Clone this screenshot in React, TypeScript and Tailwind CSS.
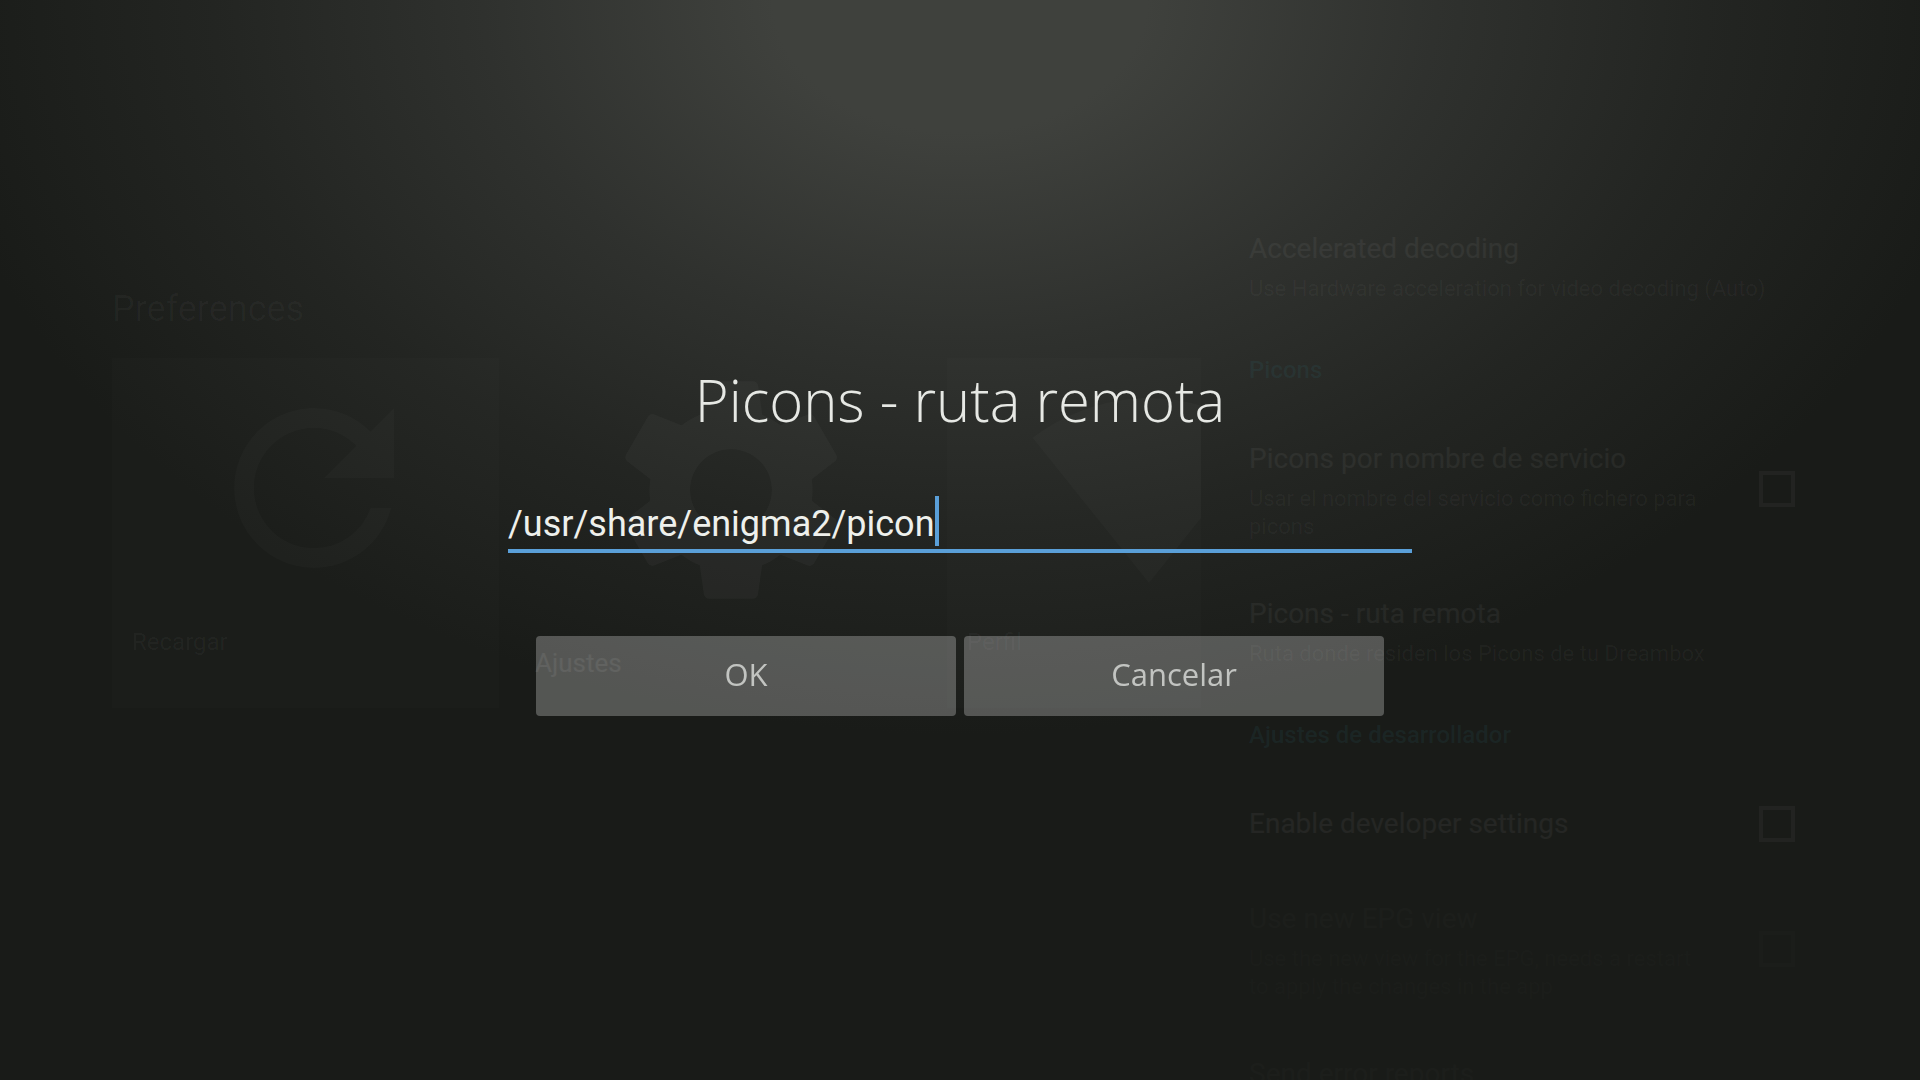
import { useEffect, useRef } from 'react'
import { MdRefresh, MdSettings, MdSignalWifi4Bar } from 'react-icons/md'

const cards = [
  { label: 'Recargar', icon: MdRefresh },
  { label: 'Ajustes', icon: MdSettings, focused: true },
  { label: 'Perfil', icon: MdSignalWifi4Bar },
]

function Card({ label, icon: Icon, focused }: { label: string; icon: typeof MdRefresh; focused?: boolean }) {
  if (focused) {
    return (
      <li className="flex h-[400px] w-[448px] shrink-0 flex-col items-center">
        <div className="flex h-[314px] items-center pl-4 text-white/3">
          <Icon size={272} />
        </div>
        <span className="self-start pl-9 text-[26px] leading-8 text-white/7">{label}</span>
      </li>
    )
  }
  return (
    <li className="flex h-[350px] w-[387px] shrink-0 flex-col items-center bg-white/1">
      <div className="flex h-[268px] items-center pb-2 pl-4 text-white/2">
        <Icon size={240} />
      </div>
      <span className="self-start pl-5 text-[24px] leading-8 text-white/4">{label}</span>
    </li>
  )
}

type OptionProps = { title: string; summary?: string; check?: boolean; faded?: boolean }

function Option({ title, summary, check, faded }: OptionProps) {
  return (
    <label className={`flex items-center justify-between ${faded ? 'opacity-30' : ''}`}>
      <span className={check ? 'w-[460px]' : 'w-full'}>
        <span className="block text-[28px] leading-[44px] text-white/5">{title}</span>
        {summary && <span className="mt-1 block text-[22px] leading-7 text-white/4">{summary}</span>}
      </span>
      {check && <input type="checkbox" className="size-9 shrink-0 appearance-none border-4 border-white/4" />}
    </label>
  )
}

function Heading({ children }: { children: string }) {
  return <h2 className="text-[24px] leading-8 font-medium text-[#2f8f9f]/10">{children}</h2>
}

export default function App() {
  const input = useRef<HTMLInputElement>(null)

  useEffect(() => {
    input.current?.focus()
  }, [])

  return (
    <div className="relative min-h-screen overflow-hidden bg-[#191b18] font-[Roboto,sans-serif]">
      <div className="absolute inset-0 bg-[radial-gradient(ellipse_54%_68%_at_50%_0%,#3f413d_0%,#3f413d_18%,#2f312e_46%,#232522_72%,#191b18_100%)]" />

      {/* Dimmed preferences screen */}
      <div className="absolute inset-0 flex" inert>
        <main className="min-w-0 flex-1 overflow-hidden pt-[285px] pl-[112px]">
          <h1 className="text-[36px] leading-[48px] text-white/3">Preferences</h1>
          <ul className="flex items-center">
            {cards.map(card => (
              <Card key={card.label} {...card} />
            ))}
          </ul>
        </main>

        <aside className="flex w-[719px] shrink-0 flex-col gap-[51px] overflow-hidden pt-[227px] pr-[125px] pl-12">
          <Option title="Accelerated decoding" summary="Use Hardware acceleration for video decoding (Auto)" />
          <Heading>Picons</Heading>
          <Option
            title="Picons por nombre de servicio"
            summary="Usar el nombre del servicio como fichero para picons"
            check
          />
          <Option title="Picons - ruta remota" summary="Ruta donde residen los Picons de tu Dreambox" />
          <Heading>Ajustes de desarrollador</Heading>
          <Option title="Enable developer settings" check />
          <Option
            title="Use new EPG view"
            summary="Use the new view for the EPG, needs a restart to apply the changes in the app"
            check
            faded
          />
          <Option title="Send error reports" faded />
        </aside>
      </div>

      {/* Dialog */}
      <form
        className="relative mx-auto flex min-h-screen w-[904px] flex-col items-center pt-[364px]"
        onSubmit={e => e.preventDefault()}
      >
        <label htmlFor="ruta" className="font-['Open_Sans',sans-serif] text-[58px] leading-[72px] font-light text-[#e6e8e4]">
          Picons - ruta remota
        </label>
        <div className="mt-[60px] w-full border-b-4 border-[#5a9fd8]">
          <div className="flex h-[53px] items-start">
            <input
              id="ruta"
              ref={input}
              type="text"
              defaultValue="/usr/share/enigma2/picon"
              className="field-sizing-content h-14 bg-transparent text-[36px] text-[#eef0ec] caret-transparent outline-none"
            />
            <span className="h-[50px] w-1 bg-[#5a9fd8]" />
          </div>
        </div>
        <div className="mt-[83px] flex w-[848px] gap-2 font-['Open_Sans',sans-serif] text-[31px] font-medium text-[#c2c4c1]">
          <button type="submit" className="h-20 flex-1 rounded-sm bg-white/26 pb-1">OK</button>
          <button type="button" className="h-20 flex-1 rounded-sm bg-white/26 pb-1">Cancelar</button>
        </div>
      </form>
    </div>
  )
}
